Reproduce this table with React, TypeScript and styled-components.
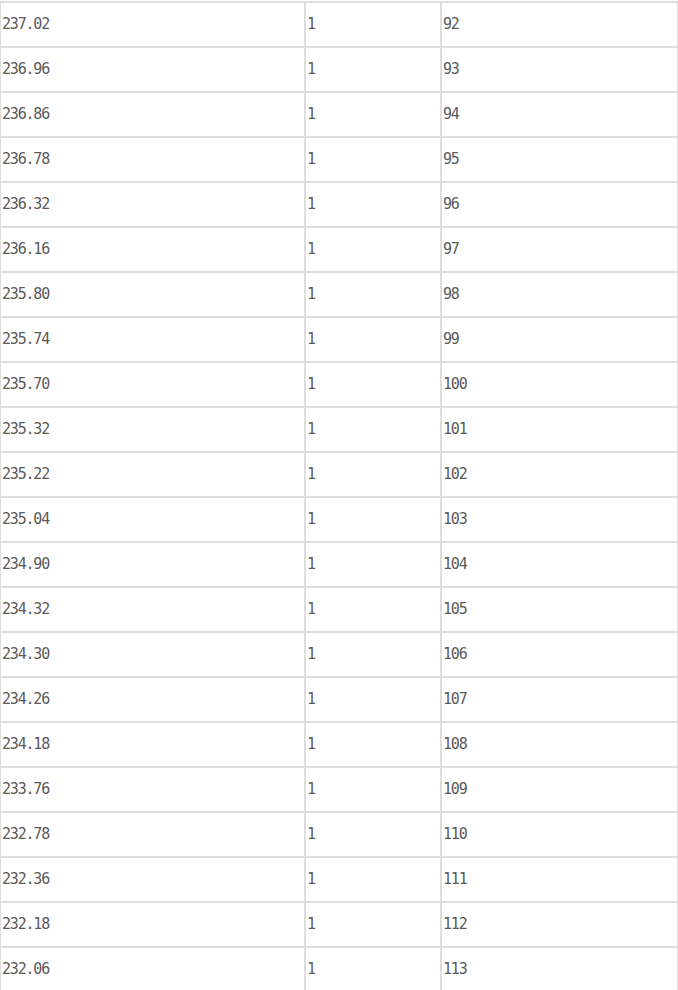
import React from 'react'
import styled, { createGlobalStyle } from 'styled-components'

const rows: [string, string, string][] = [
  ['237.02', '1', '92'],
  ['236.96', '1', '93'],
  ['236.86', '1', '94'],
  ['236.78', '1', '95'],
  ['236.32', '1', '96'],
  ['236.16', '1', '97'],
  ['235.80', '1', '98'],
  ['235.74', '1', '99'],
  ['235.70', '1', '100'],
  ['235.32', '1', '101'],
  ['235.22', '1', '102'],
  ['235.04', '1', '103'],
  ['234.90', '1', '104'],
  ['234.32', '1', '105'],
  ['234.30', '1', '106'],
  ['234.26', '1', '107'],
  ['234.18', '1', '108'],
  ['233.76', '1', '109'],
  ['232.78', '1', '110'],
  ['232.36', '1', '111'],
  ['232.18', '1', '112'],
  ['232.06', '1', '113']
]

const GlobalStyle = createGlobalStyle`
  html, body {
    margin: 0;
    padding: 0;
    background: #fff;
    overflow: hidden;
  }
`

const Wrapper = styled.div`
  width: 678px;
  margin-top: 1px;
  border-top: 1px solid #dddddd;
`

const Table = styled.table`
  width: 678px;
  border-collapse: separate;
  border-spacing: 0;
  table-layout: fixed;
`

const Cell = styled.td<{ $width: number }>`
  width: ${({ $width }) => $width}px;
  height: 45px;
  box-sizing: border-box;
  padding: 0 0 2px 1px;
  border: 1px solid #dddddd;
  vertical-align: middle;
  font-family: 'DejaVu Sans Mono', 'Liberation Mono', monospace;
  font-size: 15px;
  letter-spacing: -1.2px;
  color: #5a5a5a;
  white-space: nowrap;
`

export default function App() {
  return (
    <>
      <GlobalStyle />
      <Wrapper>
        <Table>
          <tbody>
            {rows.map(([price, count, rank]) => (
              <tr key={rank}>
                <Cell $width={305}>{price}</Cell>
                <Cell $width={136}>{count}</Cell>
                <Cell $width={237}>{rank}</Cell>
              </tr>
            ))}
          </tbody>
        </Table>
      </Wrapper>
    </>
  )
}
